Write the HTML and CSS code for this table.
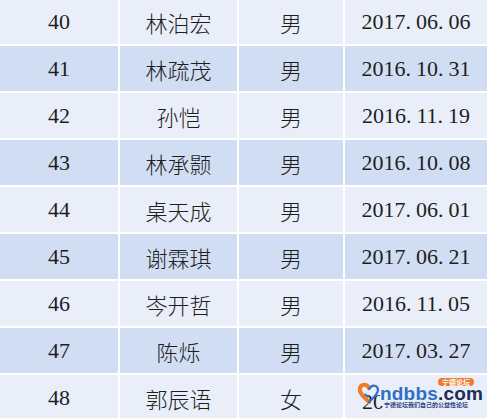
FILE: index.html
```html
<!DOCTYPE html>
<html lang="zh-CN">
<head>
<meta charset="utf-8">
<title>名单</title>
<link rel="stylesheet" href="styles.css">
</head>
<body>
<table class="roster">
  <colgroup>
    <col class="c-no"><col class="c-name"><col class="c-sex"><col class="c-date">
  </colgroup>
  <tr class="light"><td class="num">40</td><td class="cjk">林泊宏</td><td class="cjk">男</td><td class="num">2017<span class="dot">.</span>06<span class="dot">.</span>06</td></tr>
  <tr class="dark"><td class="num">41</td><td class="cjk">林疏茂</td><td class="cjk">男</td><td class="num">2016<span class="dot">.</span>10<span class="dot">.</span>31</td></tr>
  <tr class="light"><td class="num">42</td><td class="cjk">孙恺</td><td class="cjk">男</td><td class="num">2016<span class="dot">.</span>11<span class="dot">.</span>19</td></tr>
  <tr class="dark"><td class="num">43</td><td class="cjk">林承颢</td><td class="cjk">男</td><td class="num">2016<span class="dot">.</span>10<span class="dot">.</span>08</td></tr>
  <tr class="light"><td class="num">44</td><td class="cjk">桌天成</td><td class="cjk">男</td><td class="num">2017<span class="dot">.</span>06<span class="dot">.</span>01</td></tr>
  <tr class="dark"><td class="num">45</td><td class="cjk">谢霖琪</td><td class="cjk">男</td><td class="num">2017<span class="dot">.</span>06<span class="dot">.</span>21</td></tr>
  <tr class="light"><td class="num">46</td><td class="cjk">岑开哲</td><td class="cjk">男</td><td class="num">2016<span class="dot">.</span>11<span class="dot">.</span>05</td></tr>
  <tr class="dark"><td class="num">47</td><td class="cjk">陈烁</td><td class="cjk">男</td><td class="num">2017<span class="dot">.</span>03<span class="dot">.</span>27</td></tr>
  <tr class="light"><td class="num">48</td><td class="cjk">郭辰语</td><td class="cjk">女</td><td class="num last-date">20</td></tr>
</table>

<div class="watermark">
  <svg class="wm-heart" width="22" height="24" viewBox="0 0 22 24">
    <path d="M11 7 C8 2 1 3 2 10 C3 14 7 17 11 21" fill="none" stroke="#f07a2a" stroke-width="4" stroke-linecap="round"/>
    <path d="M11 21 C15 17 20 13 20 9 C20 4 14 3 11 8" fill="none" stroke="#2f6fc4" stroke-width="2.2" stroke-linecap="round"/>
    <path d="M7 13 L10 16" stroke="#2f6fc4" stroke-width="1.6" stroke-linecap="round"/>
  </svg>
  <div class="wm-text">
    <span class="wm-badge">宁德论坛</span>
    <div class="wm-brand"><span class="wm-nd">ndbbs</span><span class="wm-com">.com</span></div>
    <div class="wm-slogan">宁德论坛我们自己的公益性论坛</div>
  </div>
</div>
</body>
</html>
```

FILE: styles.css
```css
html, body {
  margin: 0;
  padding: 0;
}
body {
  position: relative;
  width: 487px;
  height: 418px;
  overflow: hidden;
  background: #e9eef8;
  color: #1e1e1e;
}
.roster {
  border-collapse: separate;
  border-spacing: 0;
  table-layout: fixed;
  width: 487px;
  margin-top: -1px;
}
.c-no { width: 120px; }
.c-name { width: 119px; }
.c-sex { width: 106px; }
.c-date { width: 142px; }
.roster tr { height: 47px; }
.roster td {
  padding: 0;
  text-align: center;
  vertical-align: middle;
  border-right: 2px solid #ffffff;
  border-bottom: 2px solid #ffffff;
  font-size: 22px;
  line-height: 26px;
}
.roster td:last-child { border-right: 0; }
.light td { background: #e9eef8; }
.dark td { background: #d1ddf2; }
.num {
  font-family: "Liberation Serif", serif;
}
.cjk {
  font-family: "Noto Sans CJK SC", sans-serif;
  font-weight: 300;
}
.dot { margin-right: 5px; }
.roster td.last-date {
  text-align: left;
  padding-left: 17px;
  padding-top: 8px;
}

.watermark {
  position: absolute;
  left: 358px;
  top: 377px;
  display: flex;
  align-items: flex-start;
}
.wm-heart { margin-top: 4px; }
.wm-text {
  position: relative;
  background: #e9eef8;
  padding: 10px 2px 0 0;
  width: 94px;
  height: 19px;
}
.wm-badge {
  position: absolute;
  right: 2px;
  top: 1px;
  background: #f07a2a;
  color: #ffffff;
  font-family: "Noto Sans CJK SC", sans-serif;
  font-size: 7px;
  line-height: 8px;
  padding: 0 4px;
  border-radius: 4px;
  font-weight: 700;
}
.wm-brand {
  font-family: "Liberation Sans", sans-serif;
  font-weight: 700;
  font-size: 19px;
  line-height: 13px;
  letter-spacing: 0.2px;
  white-space: nowrap;
}
.wm-nd { color: #2f6fc4; }
.wm-com { color: #1c2c55; }
.wm-slogan {
  margin-top: 2px;
  margin-left: 4px;
  font-family: "Noto Sans CJK SC", sans-serif;
  font-size: 6px;
  line-height: 6px;
  font-weight: 700;
  color: #2a3e78;
  white-space: nowrap;
}
```
